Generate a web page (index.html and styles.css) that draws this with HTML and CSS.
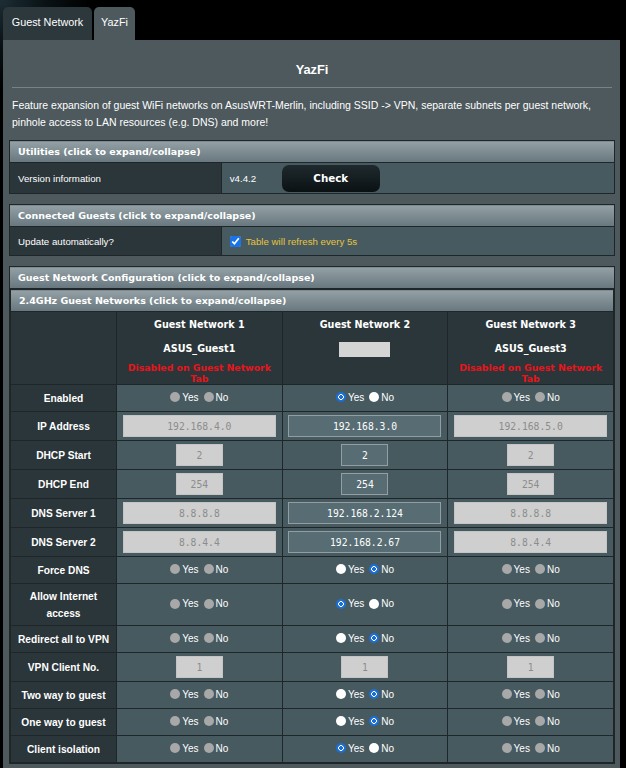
FILE: index.html
```html
<!DOCTYPE html>
<html>
<head>
<meta charset="utf-8">
<title>YazFi</title>
<link rel="stylesheet" href="styles.css">
</head>
<body>
<div class="tabs">
  <div class="tab">Guest Network</div>
  <div class="tab active">YazFi</div>
</div>
<div class="panel">
  <div class="title">YazFi</div>
  <div class="split"></div>
  <p class="desc">Feature expansion of guest WiFi networks on AsusWRT-Merlin, including SSID -&gt; VPN, separate subnets per guest network, pinhole access to LAN resources (e.g. DNS) and more!</p>

  <table class="form">
    <thead><tr><td colspan="2">Utilities (click to expand/collapse)</td></tr></thead>
    <tbody>
      <tr class="util">
        <th>Version information</th>
        <td><div class="ver"><span class="vtext">v4.4.2</span><button class="btn">Check</button></div></td>
      </tr>
    </tbody>
  </table>

  <table class="form">
    <thead><tr><td colspan="2">Connected Guests (click to expand/collapse)</td></tr></thead>
    <tbody>
      <tr class="auto">
        <th>Update automatically?</th>
        <td><label class="refresh"><input type="checkbox" class="cb" checked><span>Table will refresh every 5s</span></label></td>
      </tr>
    </tbody>
  </table>

  <table class="form">
    <thead><tr><td>Guest Network Configuration (click to expand/collapse)</td></tr></thead>
    <tbody>
      <tr><td class="nest">
        <table class="form guest">
          <colgroup><col class="c0"><col><col><col></colgroup>
          <thead><tr><td colspan="4">2.4GHz Guest Networks (click to expand/collapse)</td></tr></thead>
          <tbody>
            <tr class="gh">
              <th></th>
              <th><div class="gname">Guest Network 1</div><div class="ssid">ASUS_Guest1</div><div class="warn">Disabled on Guest Network<br>Tab</div></th>
              <th><div class="gname">Guest Network 2</div><div class="ssid"><span class="redact"></span></div><div class="warn"></div></th>
              <th><div class="gname">Guest Network 3</div><div class="ssid">ASUS_Guest3</div><div class="warn">Disabled on Guest Network<br>Tab</div></th>
            </tr>
            <tr class="r">
              <th>Enabled</th>
              <td><span class="rg"><input type="radio" class="rb" disabled>Yes<input type="radio" class="rb" disabled>No</span></td>
              <td><span class="rg"><input type="radio" class="rb" checked>Yes<input type="radio" class="rb">No</span></td>
              <td><span class="rg"><input type="radio" class="rb" disabled>Yes<input type="radio" class="rb" disabled>No</span></td>
            </tr>
            <tr class="i">
              <th>IP Address</th>
              <td><input class="ipt wide" value="192.168.4.0" disabled></td>
              <td><input class="ipt wide" value="192.168.3.0"></td>
              <td><input class="ipt wide" value="192.168.5.0" disabled></td>
            </tr>
            <tr class="i">
              <th>DHCP Start</th>
              <td><input class="ipt sm" value="2" disabled></td>
              <td><input class="ipt sm" value="2"></td>
              <td><input class="ipt sm" value="2" disabled></td>
            </tr>
            <tr class="i">
              <th>DHCP End</th>
              <td><input class="ipt sm" value="254" disabled></td>
              <td><input class="ipt sm" value="254"></td>
              <td><input class="ipt sm" value="254" disabled></td>
            </tr>
            <tr class="i">
              <th>DNS Server 1</th>
              <td><input class="ipt wide" value="8.8.8.8" disabled></td>
              <td><input class="ipt wide" value="192.168.2.124"></td>
              <td><input class="ipt wide" value="8.8.8.8" disabled></td>
            </tr>
            <tr class="i">
              <th>DNS Server 2</th>
              <td><input class="ipt wide" value="8.8.4.4" disabled></td>
              <td><input class="ipt wide" value="192.168.2.67"></td>
              <td><input class="ipt wide" value="8.8.4.4" disabled></td>
            </tr>
            <tr class="r">
              <th>Force DNS</th>
              <td><span class="rg"><input type="radio" class="rb" disabled>Yes<input type="radio" class="rb" disabled>No</span></td>
              <td><span class="rg"><input type="radio" class="rb">Yes<input type="radio" class="rb" checked>No</span></td>
              <td><span class="rg"><input type="radio" class="rb" disabled>Yes<input type="radio" class="rb" disabled>No</span></td>
            </tr>
            <tr class="r tall">
              <th>Allow Internet access</th>
              <td><span class="rg"><input type="radio" class="rb" disabled>Yes<input type="radio" class="rb" disabled>No</span></td>
              <td><span class="rg"><input type="radio" class="rb" checked>Yes<input type="radio" class="rb">No</span></td>
              <td><span class="rg"><input type="radio" class="rb" disabled>Yes<input type="radio" class="rb" disabled>No</span></td>
            </tr>
            <tr class="r">
              <th>Redirect all to VPN</th>
              <td><span class="rg"><input type="radio" class="rb" disabled>Yes<input type="radio" class="rb" disabled>No</span></td>
              <td><span class="rg"><input type="radio" class="rb">Yes<input type="radio" class="rb" checked>No</span></td>
              <td><span class="rg"><input type="radio" class="rb" disabled>Yes<input type="radio" class="rb" disabled>No</span></td>
            </tr>
            <tr class="i">
              <th>VPN Client No.</th>
              <td><input class="ipt sm" value="1" disabled></td>
              <td><input class="ipt sm" value="1" disabled></td>
              <td><input class="ipt sm" value="1" disabled></td>
            </tr>
            <tr class="r">
              <th>Two way to guest</th>
              <td><span class="rg"><input type="radio" class="rb" disabled>Yes<input type="radio" class="rb" disabled>No</span></td>
              <td><span class="rg"><input type="radio" class="rb">Yes<input type="radio" class="rb" checked>No</span></td>
              <td><span class="rg"><input type="radio" class="rb" disabled>Yes<input type="radio" class="rb" disabled>No</span></td>
            </tr>
            <tr class="r">
              <th>One way to guest</th>
              <td><span class="rg"><input type="radio" class="rb" disabled>Yes<input type="radio" class="rb" disabled>No</span></td>
              <td><span class="rg"><input type="radio" class="rb">Yes<input type="radio" class="rb" checked>No</span></td>
              <td><span class="rg"><input type="radio" class="rb" disabled>Yes<input type="radio" class="rb" disabled>No</span></td>
            </tr>
            <tr class="r">
              <th>Client isolation</th>
              <td><span class="rg"><input type="radio" class="rb" disabled>Yes<input type="radio" class="rb" disabled>No</span></td>
              <td><span class="rg"><input type="radio" class="rb" checked>Yes<input type="radio" class="rb">No</span></td>
              <td><span class="rg"><input type="radio" class="rb" disabled>Yes<input type="radio" class="rb" disabled>No</span></td>
            </tr>
          </tbody>
        </table>
      </td></tr>
    </tbody>
  </table>
</div>
</body>
</html>
```
FILE: styles.css
```css
html, body {
  margin: 0;
  padding: 0;
}
body {
  background: #000 radial-gradient(circle at 0 0, #1c2e35 0, #0a1215 45px, #000 90px) no-repeat;
  font-family: "Liberation Sans", Arial, sans-serif;
  color: #fff;
  width: 626px;
  height: 768px;
  overflow: hidden;
}
.tabs {
  display: flex;
  gap: 2px;
  padding: 7px 0 0 3px;
}
.tab {
  box-sizing: border-box;
  width: 89px;
  height: 33px;
  line-height: 31px;
  text-align: center;
  font-size: 10.8px;
  color: #fff;
  background: #2c383c;
  border-radius: 5px 5px 0 0;
}
.tab.active {
  width: 41px;
  background: #4d595d;
}
.panel {
  margin: 0 6px 0 3px;
  background: #4d595d;
  padding: 22px 5px 20px 6px;
}
.title {
  text-align: center;
  font-weight: bold;
  font-size: 12.8px;
  line-height: 16px;
}
.split {
  height: 1px;
  background: #76848a;
  margin: 9px 3px 0 3px;
}
.desc {
  margin: 9px 0 9px 0;
  padding: 0 3px;
  font-size: 10.5px;
  line-height: 17px;
}
.form {
  width: 100%;
  border-collapse: collapse;
  border: 1px solid #1e2629;
  margin-bottom: 10px;
}
.form > thead td {
  height: 21px;
  padding: 0 0 0 8px;
  background: linear-gradient(#93a1a6 0%, #68777d 100%);
  border: 1px solid #1e2629;
  font-family: "DejaVu Sans", Verdana, sans-serif;
  font-weight: bold;
  font-size: 9.5px;
  color: #fff;
  text-align: left;
}
.form th {
  background: #2b363a;
  border: 1px solid #1e2629;
  font-weight: normal;
  text-align: left;
  padding: 0 0 0 8px;
  font-size: 9.7px;
  width: 35%;
}
.form td {
  background: #475a5f;
  border: 1px solid #1e2629;
  padding: 0 0 0 8px;
  font-size: 9.7px;
}
.util th, .util td { height: 30px; }
.auto th, .auto td { height: 28px; }
.ver {
  display: flex;
  align-items: center;
}
.vtext { width: 52px; }
.btn {
  width: 98px;
  height: 27px;
  border: none;
  border-radius: 7px;
  background: linear-gradient(#1f2a2e 0%, #0b1113 100%);
  color: #fff;
  font-family: "DejaVu Sans", Verdana, sans-serif;
  font-weight: bold;
  font-size: 10.3px;
  padding: 0;
}
.refresh {
  display: flex;
  align-items: center;
  gap: 5px;
  color: #e8c340;
}
.cb {
  margin: 0;
  width: 11px;
  height: 11px;
  accent-color: #1a73e8;
}
.form td.nest {
  padding: 0;
  border: none;
  background: #4d595d;
}
.guest {
  table-layout: fixed;
  margin: 0;
  border: 1px solid #1e2629;
}
.guest col.c0 { width: 106px; }
.guest th {
  width: auto;
  text-align: center;
  font-family: "Liberation Sans", Arial, sans-serif;
  font-weight: bold;
  font-size: 10.2px;
  padding: 0;
}
.guest td {
  text-align: center;
  padding: 0;
}
.gh th {
  vertical-align: top;
  padding-top: 6px;
  height: 62px;
  font-family: "DejaVu Sans", Verdana, sans-serif;
}
.gname {
  font-size: 9.6px;
  line-height: 14px;
}
.ssid {
  margin-top: 10px;
  height: 14px;
  font-size: 9.6px;
  line-height: 14px;
  display: flex;
  justify-content: center;
  align-items: center;
}
.redact {
  display: block;
  width: 51px;
  height: 15px;
  background: #d4d4d4;
}
.warn {
  margin-top: 6px;
  color: #e8141a;
  font-size: 9.3px;
  line-height: 11px;
}
.r th, .r td { height: 26px; }
.i th, .i td { height: 28px; }
.tall th, .tall td { height: 41px; }
.tall th { line-height: 17px; padding: 0 10px; }
.rg {
  display: inline-flex;
  align-items: center;
  font-size: 10px;
  color: #fff;
}
.rb {
  appearance: none;
  -webkit-appearance: none;
  width: 10px;
  height: 10px;
  margin: 0 2px 0 0;
  border-radius: 50%;
  background: #fff;
  border: none;
}
.rg .rb:nth-of-type(2) { margin-left: 5px; }
.rb:disabled { background: #a8a8a8; }
.rb:checked {
  background: radial-gradient(circle, #1a6fd6 0 1.6px, #fff 2px 2.6px, #1a6fd6 3px);
}
.ipt {
  box-sizing: border-box;
  height: 22px;
  border: 1px solid #929ea1;
  background: #576d73;
  color: #fff;
  font-family: "DejaVu Sans Mono", "Liberation Mono", monospace;
  font-size: 9.7px;
  text-align: center;
  padding: 0;
  vertical-align: middle;
}
.ipt:disabled {
  background: #cfcfcf;
  border-color: #c4c4c4;
  color: #8c8c8c;
}
.ipt.wide { width: 153px; }
.ipt.sm { width: 47px; }
```
